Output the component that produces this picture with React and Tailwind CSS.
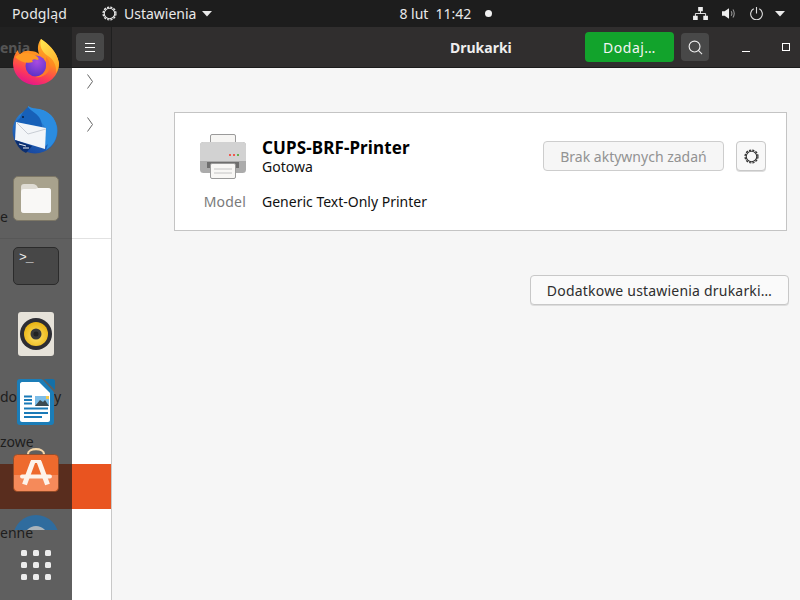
import React from 'react';

const Gear = ({ className, color }) => (
  <svg viewBox="0 0 20 20" className={className} fill="none" stroke={color}>
    <circle cx="10" cy="10" r="6.2" strokeWidth="1.300" />
    <circle cx="10" cy="10" r="7.600" strokeWidth="1.500" strokeDasharray="2.600 1.380" />
  </svg>
);

const Caret = ({ className }) => (
  <svg viewBox="0 0 10 6" className={className} fill="currentColor">
    <path d="M0 0h10L5 5.600z" />
  </svg>
);

const Chevron = () => (
  <svg viewBox="0 0 6 15" className="w-[6px] h-[15px]" fill="none" stroke="#666" strokeWidth="1">
    <path d="M0.500 0.500l5 7-5 7" />
  </svg>
);

const Firefox = () => (
  <svg viewBox="0 0 46 46" className="w-[46px] h-[46px]">
    <defs>
      <linearGradient id="ffOuter" x1="0.75" y1="0" x2="0.35" y2="1">
        <stop offset="0" stopColor="#ffb52a" />
        <stop offset="0.45" stopColor="#ff8a1f" />
        <stop offset="0.75" stopColor="#ff3e55" />
        <stop offset="1" stopColor="#e3158c" />
      </linearGradient>
      <linearGradient id="ffTail" x1="0.3" y1="0" x2="0.8" y2="1">
        <stop offset="0" stopColor="#ffe34d" />
        <stop offset="1" stopColor="#ffa526" />
      </linearGradient>
      <radialGradient id="ffGlobe" cx="0.55" cy="0.3" r="0.75">
        <stop offset="0" stopColor="#a94be0" />
        <stop offset="1" stopColor="#5630c6" />
      </radialGradient>
    </defs>
    <path d="M28 0C34 4 44 12 46 24C46 37 36 46 23 46C10 46 0 36 0 24C0 19 2 14 5 11C5 13 6 14 7 15C10 12 14 11 17 12C21 12 24 13 26 15C24 9 25 4 28 0z" fill="url(#ffOuter)" />
    <circle cx="23" cy="27" r="10.500" fill="url(#ffGlobe)" />
    <path d="M28 0C34 4 44 12 46 24C46 28 45 31 43 34C44 26 40 20 35 17C29 13 26 7 28 0z" fill="url(#ffTail)" />
    <path d="M2 18C7 14 13 13 18 15C23 16 27 19 25 21C20 19 18 21 20 23C14 25 7 23 2 18z" fill="#ff9a24" />
    <path d="M33 18C37 22 38 28 35 33C32 37 27 39 22 38C28 37 33 33 33 27C33 24 33 21 33 18z" fill="#ff7a2a" />
  </svg>
);

const Thunderbird = () => (
  <svg viewBox="0 0 48 48" className="w-[48px] h-[48px]">
    <defs>
      <linearGradient id="tbBird" x1="0.7" y1="0" x2="0.3" y2="1">
        <stop offset="0" stopColor="#2f95e6" />
        <stop offset="1" stopColor="#17459e" />
      </linearGradient>
    </defs>
    <circle cx="23" cy="25" r="22.500" fill="url(#tbBird)" />
    <path d="M16 0C21 3 26 3 30 4C39 7 45 15 45 25C45 33 41 40 34 44L36 38L31 42L32 36L26 39L34 24C32 16 25 13 16 13z" fill="#2b8ce0" />
    <path d="M8 12C10 6 14 3 16 1C19 5 24 7 27 11C29 14 30 17 30 21L4 16z" fill="#1760b8" />
    <path d="M4 16L34 22L33 43L3 34z" fill="#f3f5f8" />
    <path d="M5 17L16 28L34 23" fill="none" stroke="#bcc2ca" strokeWidth="0.800" />
    <path d="M3 34L20 40L14 47C9 45 5 40 3 34z" fill="#0d2f6f" />
    <path d="M7 38L14 40M11 42L17 42" stroke="#e8edf3" strokeWidth="1" />
    <circle cx="11" cy="11" r="1" fill="#0b1d3c" />
  </svg>
);

const Files = () => (
  <div className="w-[46px] h-[45px] rounded-[5px] bg-[#a8a28d] border border-[#7d7766] flex items-center justify-center">
    <svg viewBox="0 0 30 29" className="w-[30px] h-[29px]">
      <path d="M0 3C0 1 1 0 3 0H12C14 0 15 1 16 2L17 4H27C29 4 30 5 30 7V26C30 28 29 29 27 29H3C1 29 0 28 0 26z" fill="#dfdcd4" />
      <path d="M0 8C0 6 1 5 3 5H12C14 5 15 5 17 4H27C29 4 30 5 30 7V26C30 28 29 29 27 29H3C1 29 0 28 0 26z" fill="#f9f8f6" />
    </svg>
  </div>
);

const Terminal = () => (
  <div className="w-[46px] h-[38px] rounded-[5px] bg-[#474747] border border-[#2b2b2b] px-[5px] py-[1px]">
    <span className="block text-[#eee] text-[13px] leading-[17px] font-['Liberation_Mono',monospace] tracking-[-1px]">&gt;_</span>
  </div>
);

const Rhythmbox = () => (
  <div className="w-[36px] h-[44px] rounded-[3px] bg-[#e6e2d9] flex items-center justify-center">
    <svg viewBox="0 0 32 32" className="w-[32px] h-[32px]">
      <defs>
        <radialGradient id="rbCone" cx="0.5" cy="0.6" r="0.6">
          <stop offset="0" stopColor="#ffe169" />
          <stop offset="1" stopColor="#e9b311" />
        </radialGradient>
      </defs>
      <circle cx="16" cy="16" r="16" fill="#2d2d33" />
      <circle cx="16" cy="16" r="12" fill="url(#rbCone)" />
      <circle cx="16" cy="16" r="5.500" fill="#3a3a3a" />
      <circle cx="16" cy="16" r="2.500" fill="#222" />
    </svg>
  </div>
);

const Writer = () => (
  <svg viewBox="0 0 38 46" className="w-[38px] h-[46px]">
    <path d="M27 0h9c1 0 2 1 2 2v9z" fill="#1470a8" />
    <path d="M3 0h20c1 0 2 0 3 1l10 11c1 1 1 2 1 3v28c0 2-1 3-3 3H3c-2 0-3-1-3-3V3c0-2 1-3 3-3z" fill="#1b7db8" />
    <path d="M5 3h17l11 11v27c0 1-1 2-2 2H5c-1 0-2-1-2-2V5c0-1 1-2 2-2z" fill="#fff" />
    <path d="M7 16.500h8v2H7zM7 20h8v2H7zM7 23.500h8v2H7zM7 28.500h24v2H7zM7 33h24v2H7zM7 37h18v2H7z" fill="#1a7ab8" />
    <rect x="18" y="17" width="14" height="10" fill="#7cbde8" />
    <path d="M18 27l5-6 3 2 2-2 4 6z" fill="#3b4a52" />
    <rect x="29" y="17" width="3" height="3" fill="#f2c94c" />
  </svg>
);

const Software = () => (
  <svg viewBox="0 0 46 44" className="w-[46px] h-[44px]">
    <path d="M15 8V6C15 -0.500 31 -0.500 31 6V8" fill="none" stroke="#f5d6a8" strokeWidth="2.200" />
    <rect x="0.500" y="6.500" width="45" height="37" rx="4" fill="#ee6a2d" stroke="#8a4a2a" strokeWidth="0.800" />
    <path d="M1 27H45V39C45 41 43 43 41 43H5C3 43 1 41 1 39z" fill="#f58a5a" />
    <path d="M20 13.500L11.500 36.500M26 13.500L34.500 36.500" stroke="#fdf3ea" strokeWidth="5" fill="none" />
    <path d="M18 13.500H28" stroke="#fdf3ea" strokeWidth="3" />
    <path d="M9 28.500h28" stroke="#fdf3ea" strokeWidth="3.800" strokeLinecap="round" />
  </svg>
);

const Disc = () => (
  <svg viewBox="0 0 46 46" className="w-[46px] h-[46px]">
    <circle cx="23" cy="23" r="23" fill="#2f6c9e" />
    <circle cx="23" cy="23" r="12" fill="#aab4bb" />
    <circle cx="23" cy="23" r="4" fill="#33546c" />
  </svg>
);

const dockIcons = [Firefox, Thunderbird, Files, Terminal, Rhythmbox, Writer, Software, Disc];

const Printer = () => (
  <svg viewBox="0 0 46 45" className="w-[46px] h-[45px]">
    <rect x="10.500" y="0.500" width="25" height="14" rx="1.500" fill="#f6f5f3" stroke="#9a9a9a" />
    <rect x="0" y="8" width="46" height="31" rx="3.500" fill="#ababab" />
    <path d="M0 11.500C0 9.500 1.500 8 3.500 8h39c2 0 3.500 1.500 3.500 3.500V27H0z" fill="#d2d2d2" />
    <rect x="7" y="28" width="32" height="6" fill="#6e6e6e" />
    <rect x="10.500" y="29.500" width="25" height="15" rx="1.500" fill="#f8f7f5" stroke="#9a9a9a" />
    <path d="M14 35h18M14 39h18" stroke="#c4c4c4" />
    <rect x="29" y="20" width="2" height="2" fill="#ef5a50" />
    <rect x="33" y="20" width="2" height="2" fill="#ef5a50" />
    <rect x="37" y="20" width="2" height="2" fill="#63b04f" />
  </svg>
);

const rows = [
  { height: 'h-[26px]', text: '', chevron: true },
  { height: 'h-[60px]', text: '', chevron: true },
  { height: 'h-[40px]', text: '' },
  { height: 'h-[45px]', text: 'e', divider: true },
  { height: 'h-[45px]', text: '' },
  { height: 'h-[45px]', text: '' },
  { height: 'h-[45px]', text: '' },
  { height: 'h-[45px]', text: 'dostępny' },
  { height: 'h-[45px]', text: 'zowe' },
  { height: 'h-[45px]', text: '', active: true },
  { height: 'h-[46px]', text: 'enne' },
];

export default function App() {
  return (
    <div className="relative w-[800px] h-[600px] overflow-hidden flex flex-col bg-[#f6f6f6] font-['Noto_Sans',sans-serif] text-[14px] text-[#2e2e2e]">
      {/* top bar */}
      <div className="h-[27px] shrink-0 bg-[#1d1d1d] text-[#e9e9e9] flex items-center pl-[12px] pr-[15px]">
        <span className="tracking-[0.1px]">Podgląd</span>
        <div className="ml-[34px] flex items-center gap-[6px]">
          <Gear className="w-[17px] h-[17px]" color="#e9e9e9" />
          <span>Ustawienia</span>
          <Caret className="w-[10px] h-[6px]" />
        </div>
        <div className="ml-[187px] flex items-center gap-[7px]">
          <span>8 lut</span>
          <span>11:42</span>
          <span className="ml-[7px] w-[7px] h-[7px] rounded-full bg-[#f2f2f2]" />
        </div>
        <div className="ml-auto flex items-center">
          <svg viewBox="0 0 16 14" className="w-[15px] h-[13px]" fill="#eee">
            <path d="M5.500 0h5v4.500h-5zM0 9.500h5V14H0zM11 9.500h5V14h-5z" />
            <path d="M8 4v3M2.500 10V7h11v3" fill="none" stroke="#eee" />
          </svg>
          <svg viewBox="0 0 16 14" className="ml-[14px] w-[14px] h-[13px]">
            <path d="M0 4.500h3L8 1v12L3 9.500H0z" fill="#eee" />
            <path d="M10.500 4.500c1 1.500 1 3.500 0 5M12.500 2.500c2 3 2 6 0 9" fill="none" stroke="#999" strokeWidth="1.200" />
          </svg>
          <svg viewBox="0 0 14 14" className="ml-[14px] w-[13px] h-[13px]" fill="none" stroke="#ddd" strokeWidth="1.200">
            <path d="M4 2a6.300 6.300 0 1 0 6 0M7 0v7" />
          </svg>
          <Caret className="ml-[12px] w-[10px] h-[6px]" />
        </div>
      </div>

      {/* window header */}
      <div className="h-[41px] shrink-0 flex bg-[#302e2e] border-b border-[#1c1c1c] text-white">
        <div className="w-[112px] shrink-0 bg-[#2c2a2a] border-r border-[#1f1f1f] flex items-center justify-between pr-[7px]">
          <span className="font-bold text-[#dcdcdc]">enia</span>
          <div className="w-[28px] h-[28px] rounded-[4px] bg-[#484848] flex items-center justify-center">
            <div className="w-[10px] h-[9px] border-y border-white flex items-center">
              <div className="w-full h-[1px] bg-white" />
            </div>
          </div>
        </div>
        <div className="flex-1 flex items-center relative pr-[10px]">
          <span className="absolute left-[338px] font-bold text-[#eeeeee]">Drukarki</span>
          <div className="ml-auto w-[89px] h-[30px] rounded-[4px] bg-[#12a32c] flex items-center justify-center text-[#f4f4f4] tracking-[0.5px]">Dodaj…</div>
          <div className="ml-[7px] w-[28px] h-[28px] rounded-[4px] bg-[#484848] flex items-center justify-center">
            <svg viewBox="0 0 16 16" className="w-[15px] h-[15px]" fill="none" stroke="#eee" strokeWidth="1.200">
              <circle cx="7" cy="7" r="5.800" />
              <path d="M11 11l4 4" />
            </svg>
          </div>
          <div className="ml-[33px] w-[8px] h-[1px] mt-[8px] bg-white" />
          <div className="ml-[32px] w-[8px] h-[8px] border border-white" />
        </div>
      </div>

      {/* body */}
      <div className="flex-1 flex min-h-0">
        <div className="w-[112px] shrink-0 bg-white border-r border-[#c8c8c8]">
          {rows.map((row, i) => (
            <div
              key={i}
              className={`${row.height} flex items-center justify-between pr-[18px] text-[#222] ${row.active ? 'bg-[#e95420]' : ''} ${row.divider ? 'border-b border-[#e2e2e2]' : ''}`}
            >
              <span className="whitespace-nowrap">{row.text}</span>
              {row.chevron && <Chevron />}
            </div>
          ))}
        </div>
        <div className="flex-1 flex flex-col pl-[62px] pr-[11px] pt-[44px]">
          <div className="mr-[2px] h-[119px] bg-white border border-[#c4c4c4] flex justify-between pl-[25px] pr-[20px] pt-[21px]">
            <div className="grid grid-cols-[auto_auto] justify-start content-start gap-x-[16px]">
              <div className="h-[45px]"><Printer /></div>
              <div className="flex flex-col pt-[3px]">
                <span className="text-[17px] leading-[22px] font-bold text-black tracking-[0.12px]">CUPS-BRF-Printer</span>
                <span className="leading-[16px] text-[#111]">Gotowa</span>
              </div>
              <span className="mt-[13px] leading-[20px] text-right text-[#7a7a7a] tracking-[0.2px]">Model</span>
              <span className="mt-[13px] leading-[20px] text-[#111]">Generic Text-Only Printer</span>
            </div>
            <div className="flex gap-[12px] pt-[7px] items-start">
              <div className="w-[181px] h-[30px] rounded-[4px] bg-[#f6f6f6] border border-[#cdcdcd] flex items-center justify-center text-[#929292]">Brak aktywnych zadań</div>
              <div className="w-[30px] h-[30px] rounded-[4px] bg-[#f8f8f8] border border-[#c8c8c8] shadow-[0_1px_0_#ddd] flex items-center justify-center">
                <Gear className="w-[17px] h-[17px]" color="#333" />
              </div>
            </div>
          </div>
          <div className="self-end mt-[44px] w-[259px] h-[30px] rounded-[4px] bg-[#fafafa] border border-[#c8c8c8] shadow-[0_1px_0_#ddd] flex items-center justify-center tracking-[0.2px]">Dodatkowe ustawienia drukarki…</div>
        </div>
      </div>

      {/* dock lies over the window */}
      <div className="absolute top-[27px] bottom-0 left-0 w-[72px] bg-[rgba(30,30,30,0.71)] flex flex-col">
        <div className="h-[503px] overflow-hidden pt-[1px]">
          {dockIcons.map((Icon, i) => (
            <div key={i} className="h-[68px] flex items-center justify-center">
              <Icon />
            </div>
          ))}
        </div>
        <div className="flex-1 flex items-center justify-center">
          <div className="grid grid-cols-3 gap-[6px]">
            {Array.from({ length: 9 }).map((_, i) => (
              <div key={i} className="w-[6px] h-[6px] rounded-[1.500px] bg-[#ededed]" />
            ))}
          </div>
        </div>
      </div>
    </div>
  );
}
